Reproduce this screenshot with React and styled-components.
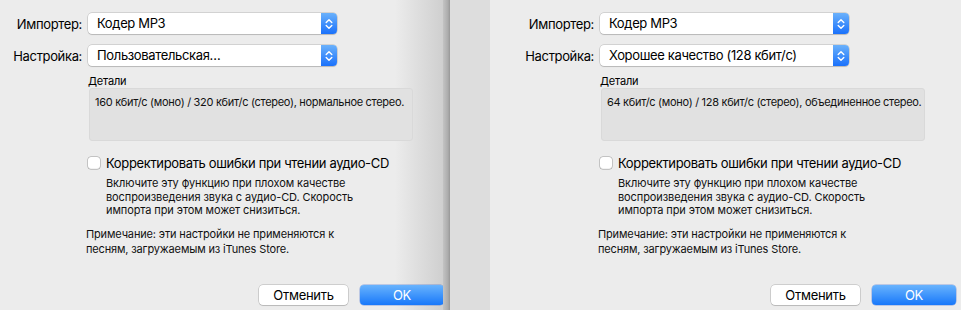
import React from "react";
import styled, { createGlobalStyle } from "styled-components";

const Global = createGlobalStyle`
  html, body { margin: 0; padding: 0; background: #ececec; }
  body {
    font-family: Inter, Roboto, "Noto Sans", "Liberation Sans", sans-serif;
    color: #000;
  }
`;

const Stage = styled.div`
  display: flex;
  width: 961px;
  height: 310px;
  overflow: hidden;
`;

const LeftPanel = styled.div`
  width: 443px;
  flex: none;
  overflow: hidden;
  display: flex;
  background: linear-gradient(to right, #ececec 395px, #cfcfcf 443px);
`;

const Divider = styled.div`
  width: 7px;
  flex: none;
  background: linear-gradient(to right, #c3c3c3, #acacac 70%, #979797);
`;

const RightPanel = styled.div`
  width: 511px;
  flex: none;
  display: flex;
  padding-left: 62px;
  box-sizing: border-box;
  background: linear-gradient(to right, #dddddd 40px, #ececec 40px);
`;

const Dialog = styled.div`
  width: 444px;
  flex: none;
  height: 310px;
  box-sizing: border-box;
  padding: 13px 0 5px;
  display: flex;
  flex-direction: column;
`;

const Form = styled.div`
  display: grid;
  grid-template-columns: 82px 249px;
  column-gap: 6px;
  row-gap: 11px;
  align-items: center;
`;

const Label = styled.div`
  font-size: 13px;
  letter-spacing: -0.35px;
  text-align: right;
  color: #000;
  white-space: nowrap;
`;

const Popup = styled.div`
  height: 21px;
  box-sizing: border-box;
  display: flex;
  align-items: stretch;
  background: #fff;
  border-radius: 4px;
  box-shadow: 0 0 0 0.5px rgba(0, 0, 0, 0.22), 0 1px 1px rgba(0, 0, 0, 0.12);
  overflow: hidden;
`;

const PopupText = styled.div`
  flex: 1;
  font-size: 13px;
  letter-spacing: -0.35px;
  line-height: 21px;
  padding-left: 9px;
  color: #000;
  white-space: nowrap;
`;

const PopupArrow = styled.div`
  width: 16px;
  flex: none;
  display: flex;
  align-items: center;
  justify-content: center;
  background: linear-gradient(to bottom, #6ab1fb, #1a71fb);
`;

const Details = styled.div`
  margin: 9px 0 0 88px;
`;

const DetailsTitle = styled.div`
  font-size: 11px;
  letter-spacing: -0.2px;
  line-height: 13px;
  color: #000;
`;

const DetailsBox = styled.div`
  margin: 0 0 0 1px;
  width: 324px;
  height: 53px;
  box-sizing: border-box;
  background: #e1e1e1;
  border: 1px solid #d9d9d9;
  border-radius: 3px;
  padding: 6px 0 0 5px;
  font-size: 11px;
  letter-spacing: -0.3px;
  line-height: 14px;
  color: #111;
  white-space: nowrap;
`;

const CheckRow = styled.label`
  display: flex;
  align-items: center;
  gap: 6px;
  margin: 14px 0 0 88px;
`;

const Box = styled.span`
  width: 12px;
  height: 12px;
  flex: none;
  background: #fff;
  border-radius: 3px;
  box-shadow: 0 0 0 0.5px rgba(0, 0, 0, 0.35), inset 0 -1px 0 rgba(0, 0, 0, 0.05);
`;

const CheckText = styled.span`
  font-size: 13px;
  letter-spacing: -0.35px;
  line-height: 16px;
  color: #000;
  white-space: nowrap;
`;

const Description = styled.div`
  margin: 6px 0 0 106px;
  width: 262px;
  font-size: 11px;
  letter-spacing: -0.1px;
  line-height: 13.7px;
  color: #111;
`;

const Note = styled.div`
  margin: 9px 0 0 86px;
  width: 268px;
  font-size: 11px;
  letter-spacing: -0.15px;
  line-height: 15px;
  color: #111;
`;

const Buttons = styled.div`
  margin-top: auto;
  display: flex;
  justify-content: flex-end;
  gap: 12px;
`;

const Button = styled.button`
  height: 20px;
  width: ${(p) => p.$w}px;
  border: none;
  border-radius: 4px;
  font-family: inherit;
  font-size: 13px;
  letter-spacing: -0.3px;
  padding: 0;
  color: ${(p) => (p.$primary ? "#fff" : "#000")};
  background: ${(p) =>
    p.$primary ? "linear-gradient(to bottom, #68b3fd, #1878fa)" : "#fff"};
  box-shadow: ${(p) =>
    p.$primary
      ? "0 0 0 0.5px rgba(0,60,200,0.4)"
      : "0 0 0 0.5px rgba(0,0,0,0.25), 0 1px 1px rgba(0,0,0,0.1)"};
`;

const Chevrons = () => (
  <svg width="8" height="12" viewBox="0 0 8 12" fill="none">
    <path d="M1.2 4.6 L4 1.8 L6.8 4.6" stroke="#fff" strokeWidth="1.4" strokeLinecap="round" strokeLinejoin="round" />
    <path d="M1.2 7.4 L4 10.2 L6.8 7.4" stroke="#fff" strokeWidth="1.4" strokeLinecap="round" strokeLinejoin="round" />
  </svg>
);

const Select = ({ value }) => (
  <Popup>
    <PopupText>{value}</PopupText>
    <PopupArrow>
      <Chevrons />
    </PopupArrow>
  </Popup>
);

const PrefsDialog = ({ preset, details }) => (
  <Dialog>
    <Form>
      <Label>Импортер:</Label>
      <Select value="Кодер MP3" />
      <Label>Настройка:</Label>
      <Select value={preset} />
    </Form>
    <Details>
      <DetailsTitle>Детали</DetailsTitle>
      <DetailsBox>{details}</DetailsBox>
    </Details>
    <CheckRow>
      <Box />
      <CheckText>Корректировать ошибки при чтении аудио-CD</CheckText>
    </CheckRow>
    <Description>
      Включите эту функцию при плохом качестве воспроизведения звука с аудио-CD. Скорость импорта при этом может снизиться.
    </Description>
    <Note>
      Примечание: эти настройки не применяются к песням, загружаемым из iTunes Store.
    </Note>
    <Buttons>
      <Button $w={89}>Отменить</Button>
      <Button $w={84} $primary>OK</Button>
    </Buttons>
  </Dialog>
);

export default function App() {
  return (
    <>
      <Global />
      <Stage>
        <LeftPanel>
          <PrefsDialog
            preset="Пользовательская…"
            details="160 кбит/с (моно) / 320 кбит/с (стерео), нормальное стерео."
          />
        </LeftPanel>
        <Divider />
        <RightPanel>
          <PrefsDialog
            preset="Хорошее качество (128 кбит/с)"
            details="64 кбит/с (моно) / 128 кбит/с (стерео), объединенное стерео."
          />
        </RightPanel>
      </Stage>
    </>
  );
}
